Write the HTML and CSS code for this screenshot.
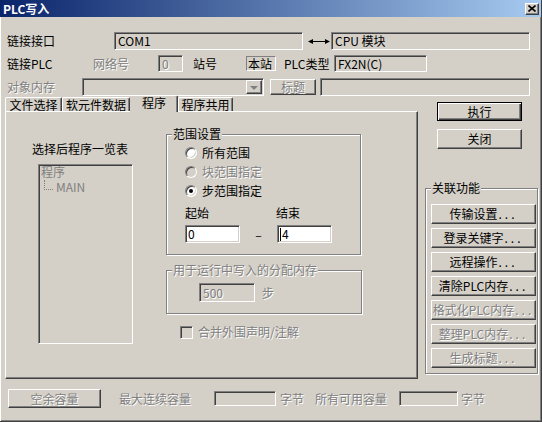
FILE: index.html
```html
<!DOCTYPE html>
<html lang="zh-CN">
<head>
  <meta charset="UTF-8">
  <title>PLC写入</title>
  <link rel="stylesheet" href="styles.css">
</head>
<body>

  <div class="window">
    <div class="titlebar">
      <span class="title">PLC写入</span>
      <span class="close-btn">
        <svg width="8" height="7" viewBox="0 0 8 7"><path d="M0.5 0.5L7.5 6.5M7.5 0.5L0.5 6.5" stroke="#000" stroke-width="1.6"/></svg>
      </span>
    </div>

    <div class="form">
      <div class="row r1">
        <span class="lbl w-link">链接接口</span>
        <span class="edit w-com">COM1</span>
        <span class="arrow">
          <svg width="22" height="7" viewBox="0 0 22 7"><path d="M2 3.5H20" stroke="#000"/><path d="M0 3.5L5 1V6Z M22 3.5L17 1V6Z" fill="#000"/></svg>
        </span>
        <span class="edit w-cpu">CPU 模块</span>
      </div>

      <div class="row r2">
        <span class="lbl w-plc">链接PLC</span>
        <span class="lbl dis w-net">网络号</span>
        <span class="edit dis w-netbox">0</span>
        <span class="lbl w-station">站号</span>
        <span class="static w-local">本站</span>
        <span class="lbl w-type">PLC类型</span>
        <span class="edit w-fx">FX2N(C)</span>
      </div>

      <div class="row r3">
        <span class="lbl dis w-obj">对象内存</span>
        <span class="edit combo"><span class="btn combo-btn"><span class="tri"></span></span></span>
        <span class="btn dis w-titlebtn">标题</span>
        <span class="edit w-titlebox"></span>
      </div>

      <div class="main">
        <div class="tabwrap">
          <div class="tabstrip">
            <span class="tab t1">文件选择</span>
            <span class="tab t2">软元件数据</span>
            <span class="tab t3 active">程序</span>
            <span class="tab t4">程序共用</span>
          </div>
          <div class="panel">
            <div class="prog-col">
              <div class="prog-caption">选择后程序一览表</div>
              <div class="edit listbox">
                <div class="tree-root">程序</div>
                <div class="tree-item"><span class="tree-line"></span>MAIN</div>
              </div>
            </div>

            <div class="range-col">
              <div class="group range">
                <span class="group-title">范围设置</span>
                <div class="radio-row"><span class="radio"></span>所有范围</div>
                <div class="radio-row dis"><span class="radio off"></span>块范围指定</div>
                <div class="radio-row"><span class="radio on"></span>步范围指定</div>
                <div class="step-labels">
                  <span class="step-start">起始</span>
                  <span>结束</span>
                </div>
                <div class="step-inputs">
                  <span class="edit white step-box">0</span>
                  <span class="dash">–</span>
                  <span class="edit white step-box"><span class="caret"></span>4</span>
                </div>
              </div>

              <div class="group mem">
                <span class="group-title dis">用于运行中写入的分配内存</span>
                <div class="mem-row">
                  <span class="edit dis mem-box">500</span>
                  <span class="dis mem-unit">步</span>
                </div>
              </div>

              <div class="check-row dis">
                <span class="check"></span>合并外围声明/注解
              </div>
            </div>
          </div>
        </div>

        <div class="side">
          <span class="btn default side-btn exec">执行</span>
          <span class="btn side-btn close">关闭</span>
          <div class="group links">
            <span class="group-title">关联功能</span>
            <span class="btn link-btn">传输设置<span class="dots">...</span></span>
            <span class="btn link-btn">登录关键字<span class="dots">...</span></span>
            <span class="btn link-btn">远程操作<span class="dots">...</span></span>
            <span class="btn link-btn">清除PLC内存<span class="dots">...</span></span>
            <span class="btn link-btn dis">格式化PLC内存<span class="dots">...</span></span>
            <span class="btn link-btn dis">整理PLC内存<span class="dots">...</span></span>
            <span class="btn link-btn dis">生成标题<span class="dots">...</span></span>
          </div>
        </div>
      </div>

      <div class="footer">
        <span class="btn dis free-btn">空余容量</span>
        <span class="lbl dis w-maxcap">最大连续容量</span>
        <span class="edit foot-box1"></span>
        <span class="lbl dis w-byte1">字节</span>
        <span class="lbl dis w-allcap">所有可用容量</span>
        <span class="edit foot-box2"></span>
        <span class="lbl dis w-byte2">字节</span>
      </div>
    </div>
  </div>

</body>
</html>
```

FILE: styles.css
```css
body {
  margin: 0;
  background: #d4d0c8;
  font-family: "Noto Sans CJK SC", sans-serif;
  font-size: 12px;
  color: #000;
}

.window {
  width: 542px;
  height: 422px;
  box-sizing: border-box;
  background: #d4d0c8;
  border-right: 1px solid #404040;
  border-bottom: 1px solid #404040;
  box-shadow: inset 1px 0 #fff, inset -1px -1px #808080;
  overflow: hidden;
}

.titlebar {
  height: 17px;
  display: flex;
  align-items: center;
  justify-content: space-between;
  padding: 0 2px 0 3px;
  background: linear-gradient(to right, #0a246a, #a6caf0);
}

.title {
  color: #fff;
  font-weight: bold;
  line-height: 17px;
}

.close-btn {
  width: 14px;
  height: 12px;
  box-sizing: border-box;
  background: #d4d0c8;
  border: 1px solid;
  border-color: #fff #404040 #404040 #fff;
  box-shadow: inset -1px -1px #808080;
  display: flex;
  align-items: center;
  justify-content: center;
}

/* common controls */

.lbl {
  flex: none;
  line-height: 14px;
  white-space: nowrap;
}

.dis {
  color: #808080;
  text-shadow: 1px 1px #fff;
}

.edit {
  flex: none;
  box-sizing: border-box;
  display: flex;
  align-items: center;
  padding: 0 3px;
  border: 1px solid;
  border-color: #808080 #fff #fff #808080;
  box-shadow: inset 1px 1px #404040, inset -1px -1px #d4d0c8;
  white-space: nowrap;
  line-height: 14px;
}

.edit.white {
  background: #fff;
}

.static {
  flex: none;
  box-sizing: border-box;
  border: 1px solid;
  border-color: #808080 #fff #fff #808080;
  padding: 0 1px;
  line-height: 13px;
}

.btn {
  flex: none;
  box-sizing: border-box;
  display: flex;
  align-items: center;
  justify-content: center;
  border: 1px solid;
  border-color: #fff #404040 #404040 #fff;
  box-shadow: inset -1px -1px #808080;
  white-space: nowrap;
  line-height: 14px;
}

.btn.default {
  border-color: #000;
  box-shadow: inset 1px 1px #fff, inset -1px -1px #404040, inset -2px -2px #808080;
}

.dots {
  letter-spacing: 3px;
  margin-left: 1px;
}

/* top rows */

.row {
  display: flex;
  align-items: center;
}

.r1 {
  margin-top: 15px;
  height: 18px;
}

.w-link { margin-left: 7px; width: 107px; }
.w-com { width: 189px; height: 18px; }
.arrow { flex: none; width: 28px; display: flex; justify-content: flex-end; padding-right: 1px; box-sizing: border-box; }
.w-cpu { width: 199px; height: 18px; }

.r2 {
  margin-top: 5px;
  height: 17px;
}

.w-plc { margin-left: 7px; width: 86px; }
.w-net { width: 65px; }
.w-netbox { width: 25px; height: 17px; }
.w-station { margin-left: 10px; width: 53px; }
.w-local { width: 30px; height: 15px; }
.w-type { margin-left: 8px; width: 50px; }
.w-fx { width: 93px; height: 17px; }

.r3 {
  margin-top: 6px;
  height: 18px;
}

.w-obj { margin-left: 7px; width: 75px; }

.combo {
  width: 182px;
  height: 18px;
  padding: 1px;
  justify-content: flex-end;
}

.combo-btn {
  width: 16px;
  height: 14px;
  background: #d4d0c8;
}

.tri {
  width: 0;
  height: 0;
  border-left: 4px solid transparent;
  border-right: 4px solid transparent;
  border-top: 4px solid #808080;
  margin-top: 1px;
}

.w-titlebtn { margin-left: 6px; width: 46px; height: 16px; }
.w-titlebox { margin-left: 4px; width: 210px; height: 18px; }

/* tabs */

.main {
  display: flex;
  margin-top: -1px;
}

.tabwrap {
  margin-left: 5px;
  width: 413px;
}

.tabstrip {
  display: flex;
  align-items: flex-end;
  height: 16px;
}

.tab {
  flex: none;
  height: 14px;
  box-sizing: border-box;
  border-top: 1px solid #fff;
  border-left: 1px solid #fff;
  border-right: 1px solid #404040;
  border-radius: 2px 2px 0 0;
  box-shadow: inset -1px 0 #808080;
  text-align: center;
  line-height: 13px;
}

.tab.active {
  height: 17px;
  margin-bottom: -1px;
  position: relative;
  z-index: 1;
  background: #d4d0c8;
  border-left-color: #d4d0c8;
  line-height: 14px;
}

.t1 { width: 57px; }
.t2 { width: 68px; }
.t3 { width: 48px; }
.t4 { width: 55px; }

.panel {
  height: 268px;
  box-sizing: border-box;
  border: 1px solid;
  border-color: #fff #404040 #404040 #fff;
  box-shadow: inset -1px -1px #808080;
  display: flex;
}

.prog-col {
  width: 160px;
  padding-top: 30px;
}

.prog-caption {
  margin-left: 26px;
  line-height: 14px;
}

.listbox {
  margin-left: 32px;
  margin-top: 8px;
  width: 95px;
  height: 180px;
  padding: 0 2px;
  display: block;
  color: #808080;
}

.tree-root {
  line-height: 14px;
}

.tree-item {
  display: flex;
  align-items: flex-end;
  line-height: 15px;
}

.tree-line {
  width: 8px;
  height: 9px;
  margin: 0 3px 4px 3px;
  border-left: 1px dotted #808080;
  border-bottom: 1px dotted #808080;
}

/* group boxes */

.group {
  position: relative;
  box-sizing: border-box;
  border: 1px solid #808080;
  box-shadow: inset 1px 1px #fff, 1px 1px #fff;
}

.group-title {
  position: absolute;
  top: -8px;
  left: 5px;
  padding: 0 1px;
  background: #d4d0c8;
  line-height: 14px;
  white-space: nowrap;
}

.range-col {
  display: flex;
  flex-direction: column;
}

.range {
  margin-top: 22px;
  width: 195px;
  height: 121px;
  padding-top: 8px;
}

.radio-row {
  display: flex;
  align-items: center;
  gap: 5px;
  height: 19px;
  padding-left: 18px;
  line-height: 14px;
}

.radio {
  position: relative;
  width: 12px;
  height: 12px;
  box-sizing: border-box;
  border-radius: 50%;
  border: 1px solid;
  border-color: #808080 #fff #fff #808080;
  background: #fff;
  box-shadow: inset 1px 1px #404040, inset -1px -1px #d4d0c8;
}

.radio.off {
  background: #d4d0c8;
}

.radio.on::after {
  content: "";
  position: absolute;
  left: 3px;
  top: 3px;
  width: 4px;
  height: 4px;
  border-radius: 50%;
  background: #000;
}

.step-labels {
  display: flex;
  margin-top: 6px;
  padding-left: 18px;
  line-height: 14px;
}

.step-start {
  width: 91px;
}

.step-inputs {
  display: flex;
  align-items: center;
  margin-top: 5px;
  padding-left: 18px;
}

.step-box {
  width: 55px;
  height: 18px;
  padding-left: 2px;
}

.caret {
  width: 1px;
  height: 13px;
  background: #000;
  margin-right: 1px;
}

.dash {
  width: 37px;
  text-align: center;
}

.mem {
  margin-top: 15px;
  width: 196px;
  height: 44px;
  padding-top: 12px;
}

.mem-row {
  display: flex;
  align-items: center;
  padding-left: 32px;
}

.mem-box {
  width: 56px;
  height: 19px;
}

.mem-unit {
  margin-left: 7px;
}

.check-row {
  display: flex;
  align-items: center;
  gap: 5px;
  margin-top: 11px;
  padding-left: 14px;
  line-height: 14px;
}

.check {
  width: 13px;
  height: 13px;
  box-sizing: border-box;
  border: 1px solid;
  border-color: #808080 #fff #fff #808080;
  box-shadow: inset 1px 1px #404040, inset -1px -1px #d4d0c8;
}

/* right column */

.side {
  margin-left: 7px;
  width: 114px;
  display: flex;
  flex-direction: column;
}

.side-btn {
  margin-left: 12px;
  width: 85px;
}

.exec {
  margin-top: 7px;
  height: 19px;
}

.close {
  margin-top: 8px;
  height: 20px;
}

.links {
  margin-top: 39px;
  width: 113px;
  height: 186px;
  padding: 15px 0 0 5px;
  display: flex;
  flex-direction: column;
  gap: 4px;
}

.link-btn {
  width: 105px;
  height: 20px;
}

/* bottom row */

.footer {
  display: flex;
  align-items: center;
  height: 19px;
  margin-top: 10px;
}

.free-btn { margin-left: 8px; width: 93px; height: 19px; }
.w-maxcap { margin-left: 18px; width: 95px; }
.foot-box1 { width: 62px; height: 15px; }
.w-byte1 { margin-left: 4px; width: 35px; }
.w-allcap { width: 84px; }
.foot-box2 { width: 59px; height: 15px; }
.w-byte2 { margin-left: 3px; }
```
